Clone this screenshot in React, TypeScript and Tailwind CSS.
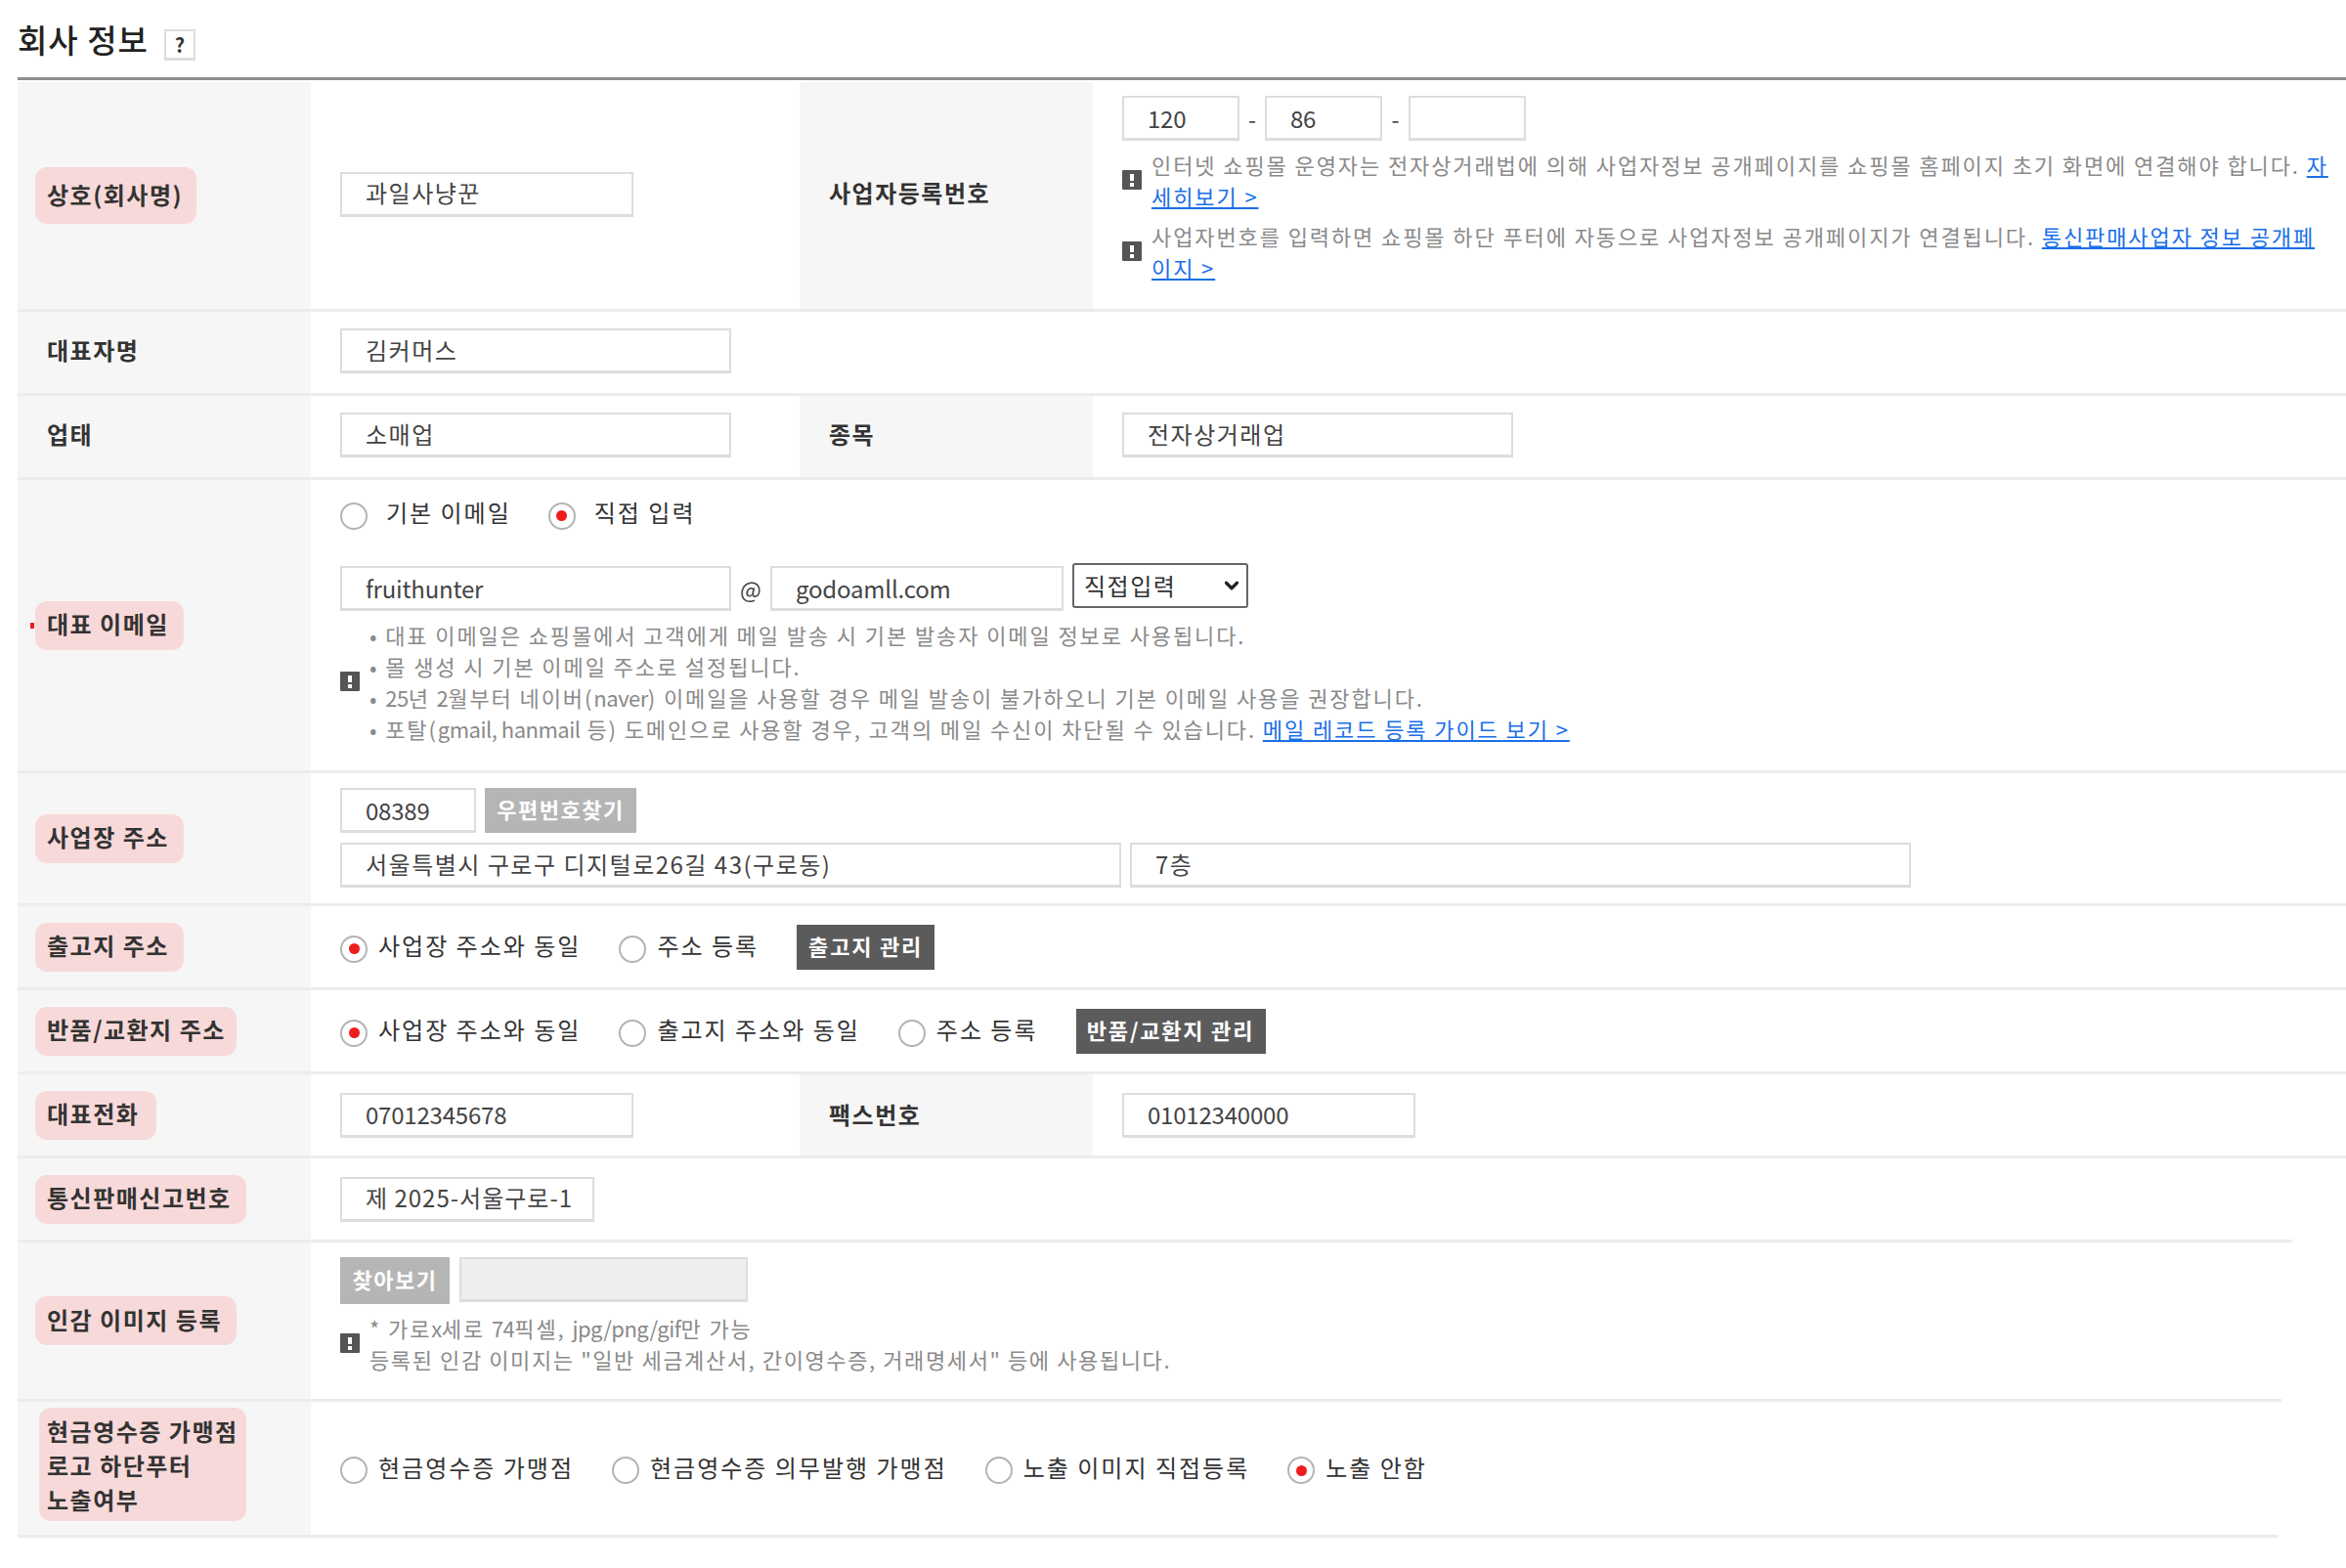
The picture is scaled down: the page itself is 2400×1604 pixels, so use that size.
import type { ReactNode } from "react";
import { ChevronDown } from "lucide-react";

const inputBase = "h-[46px] border-2 border-b-[3px] border-[#ddd] bg-white pl-[24px] text-[#444] outline-none";
const hangulInput = "pb-[3px] text-[24px] tracking-[1.5px]";
const latinInput = "pb-[1px] text-[24px] tracking-[-0.2px]";
const mixedInput = "pb-[3px] text-[24px] tracking-[1px]";

function Field({ value, className, kind = hangulInput }: { value: string; className: string; kind?: string }) {
  return <input readOnly defaultValue={value} className={`${inputBase} ${kind} ${className}`} />;
}

function Badge({ children, className = "" }: { children: ReactNode; className?: string }) {
  return (
    <span className={`flex h-[50px] items-center rounded-[12px] bg-[#f8d9d9] px-[12px] pb-[3px] text-[24px] font-bold tracking-[1.5px] whitespace-nowrap text-[#333] ${className}`}>
      {children}
    </span>
  );
}

function Radio({ label, checked, className = "", gap = "ml-[11px]" }: { label: string; checked?: boolean; className?: string; gap?: string }) {
  return (
    <label className={`flex items-center text-[24px] tracking-[2px] text-[#333] ${className}`}>
      <span className="mt-[4px] flex h-[28px] w-[28px] shrink-0 items-center justify-center rounded-full border-2 border-[#b4b4b4] bg-white">
        {checked ? <span className="h-[11px] w-[11px] rounded-full bg-[#ee1c1c]" /> : null}
      </span>
      <span className={`${gap} -mt-[3px] whitespace-nowrap`}>{label}</span>
    </label>
  );
}

function NoteIcon() {
  return (
    <span className="flex h-[20px] w-[20px] shrink-0 flex-col items-center justify-center gap-[2px] rounded-[1px] bg-[#555]">
      <span className="h-[7px] w-[4px] bg-white" />
      <span className="h-[4px] w-[4px] bg-white" />
    </span>
  );
}

function Note({ children, className = "" }: { children: ReactNode; className?: string }) {
  return (
    <div className={`flex items-center ${className}`}>
      <NoteIcon />
      <div className="ml-[10px] min-w-0 flex-1 text-[22px] leading-[32px] tracking-[1.9px] text-[#8a8a8a]">{children}</div>
    </div>
  );
}

// latin runs are narrower than the hangul spacing in the notes
function L({ children }: { children: ReactNode }) {
  return <span className="tracking-[-0.5px]">{children}</span>;
}

function A({ children }: { children: ReactNode }) {
  return <a className="text-[#1a6fe8] underline">{children}</a>;
}

function Th({ children, className = "" }: { children?: ReactNode; className?: string }) {
  return (
    <div className={`flex w-[300px] shrink-0 items-center bg-[#f6f6f6] text-[24px] font-bold tracking-[1.5px] text-[#333] ${className}`}>
      {children}
    </div>
  );
}

function Row({ children, className }: { children: ReactNode; className: string }) {
  return <div className={`flex border-b-[3px] border-[#ececec] ${className}`}>{children}</div>;
}

function Td({ children, className = "" }: { children: ReactNode; className?: string }) {
  return <div className={`flex min-w-0 pl-[30px] ${className}`}>{children}</div>;
}

function DarkBtn({ children, className }: { children: ReactNode; className: string }) {
  return (
    <button className={`flex h-[46px] items-center justify-center bg-[#5b5b5b] pb-[3px] text-[22px] font-bold tracking-[1.8px] text-white ${className}`}>
      {children}
    </button>
  );
}

export default function App() {
  return (
    <div className="min-h-[1604px] w-[2400px] overflow-hidden bg-white font-['Noto_Sans_CJK_KR',sans-serif]">
      <div className="ml-[18px] flex h-[79px] items-start pt-[20px]">
        <h1 className="text-[33px] leading-[40px] font-medium tracking-[1px] text-[#222]">회사 정보</h1>
        <span className="mt-[10px] ml-[16px] flex h-[32px] w-[32px] items-center justify-center border-2 border-b-[3px] border-[#ddd] text-[20px] font-bold text-[#333]">
          ?
        </span>
      </div>
      <div className="mb-[2px] ml-[18px] h-[3px] bg-[#8f8f8f]" />

      <div className="ml-[18px]">
        <Row className="h-[235px]">
          <Th className="pl-[18px]">
            <Badge className="h-[58px] w-[165px]">상호(회사명)</Badge>
          </Th>
          <Td className="w-[500px] items-center pb-[3px]">
            <Field value="과일사냥꾼" className="w-[300px]" />
          </Td>
          <Th className="pb-[6px] pl-[30px]">사업자등록번호</Th>
          <Td className="w-[1270px] flex-col pt-[14px]">
            <div className="flex items-center text-[23px] text-[#444]">
              <Field kind={latinInput} value="120" className="w-[120px]" />
              <span className="w-[26px] text-center">-</span>
              <Field kind={latinInput} value="86" className="w-[120px]" />
              <span className="w-[27px] text-center">-</span>
              <Field kind={latinInput} value="" className="w-[120px]" />
            </div>
            <Note className="mt-[8px]">
              인터넷 쇼핑몰 운영자는 전자상거래법에 의해 사업자정보 공개페이지를 쇼핑몰 홈페이지 초기 화면에 연결해야 합니다. <A>자세히보기 &gt;</A>
            </Note>
            <Note className="mt-[9px]">
              사업자번호를 입력하면 쇼핑몰 하단 푸터에 자동으로 사업자정보 공개페이지가 연결됩니다. <A>통신판매사업자 정보 공개페이지 &gt;</A>
            </Note>
          </Td>
        </Row>

        <Row className="h-[86px]">
          <Th className="pb-[6px] pl-[30px]">대표자명</Th>
          <Td className="items-center pb-[3px]">
            <Field value="김커머스" className="w-[400px]" />
          </Td>
        </Row>

        <Row className="h-[86px]">
          <Th className="pb-[6px] pl-[30px]">업태</Th>
          <Td className="w-[500px] items-center pb-[3px]">
            <Field value="소매업" className="w-[400px]" />
          </Td>
          <Th className="pb-[6px] pl-[30px]">종목</Th>
          <Td className="items-center pb-[3px]">
            <Field value="전자상거래업" className="w-[400px]" />
          </Td>
        </Row>

        <Row className="h-[300px]">
          <Th className="relative pl-[18px]">
            <span className="absolute top-[146px] left-[13px] z-10 h-[6px] w-[4px] bg-[#ee1c1c]" />
            <Badge className="w-[152px]">대표 이메일</Badge>
          </Th>
          <Td className="flex-col pt-[18px]">
            <div className="flex items-center">
              <Radio label="기본 이메일" gap="ml-[19px]" />
              <Radio label="직접 입력" checked gap="ml-[19px]" className="ml-[38px]" />
            </div>
            <div className="mt-[37px] flex items-start">
              <Field kind={latinInput} value="fruithunter" className="w-[400px]" />
              <span className="w-[40px] pt-[6px] text-center text-[23px] text-[#444]">@</span>
              <Field kind={latinInput} value="godoamll.com" className="w-[300px]" />
              <span className="relative -mt-[3px] ml-[9px]">
                <select
                  defaultValue="직접입력"
                  className="h-[46px] w-[180px] appearance-none rounded-[3px] border-2 border-[#666] bg-white pb-[1px] pl-[10px] text-[24px] tracking-[1.5px] text-[#333]"
                >
                  <option>직접입력</option>
                </select>
                <ChevronDown strokeWidth={3.5} className="pointer-events-none absolute top-[12px] right-[6px] h-[22px] w-[22px] text-[#222]" />
              </span>
            </div>
            <Note className="mt-[8px]">
              <div>• 대표 이메일은 쇼핑몰에서 고객에게 메일 발송 시 기본 발송자 이메일 정보로 사용됩니다.</div>
              <div>• 몰 생성 시 기본 이메일 주소로 설정됩니다.</div>
              <div>
                • <L>25</L>년 <L>2</L>월부터 네이버(<L>naver</L>) 이메일을 사용할 경우 메일 발송이 불가하오니 기본 이메일 사용을 권장합니다.
              </div>
              <div>
                • 포탈(<L>gmail, hanmail</L> 등) 도메인으로 사용할 경우, 고객의 메일 수신이 차단될 수 있습니다. <A>메일 레코드 등록 가이드 보기 &gt;</A>
              </div>
            </Note>
          </Td>
        </Row>

        <Row className="h-[136px]">
          <Th className="pl-[18px]">
            <Badge className="w-[152px]">사업장 주소</Badge>
          </Th>
          <Td className="flex-col gap-[10px] pt-[15px]">
            <div className="flex gap-[9px]">
              <Field kind={latinInput} value="08389" className="w-[139px]" />
              <button className="h-[46px] w-[155px] bg-[#b5b5b5] pb-[3px] text-[22px] font-bold tracking-[1.5px] text-white">우편번호찾기</button>
            </div>
            <div className="flex gap-[9px]">
              <Field value="서울특별시 구로구 디지털로26길 43(구로동)" className="w-[799px]" />
              <Field value="7층" className="w-[799px]" />
            </div>
          </Td>
        </Row>

        <Row className="h-[86px]">
          <Th className="pl-[18px]">
            <Badge className="w-[152px]">출고지 주소</Badge>
          </Th>
          <Td className="items-center">
            <Radio checked label="사업장 주소와 동일" />
            <Radio label="주소 등록" className="ml-[39px]" />
            <DarkBtn className="ml-[39px] w-[141px]">출고지 관리</DarkBtn>
          </Td>
        </Row>

        <Row className="h-[86px]">
          <Th className="pl-[18px]">
            <Badge className="w-[206px]">반품/교환지 주소</Badge>
          </Th>
          <Td className="items-center">
            <Radio checked label="사업장 주소와 동일" />
            <Radio label="출고지 주소와 동일" className="ml-[39px]" />
            <Radio label="주소 등록" className="ml-[39px]" />
            <DarkBtn className="ml-[39px] w-[194px]">반품/교환지 관리</DarkBtn>
          </Td>
        </Row>

        <Row className="h-[86px]">
          <Th className="pl-[18px]">
            <Badge className="w-[124px]">대표전화</Badge>
          </Th>
          <Td className="w-[500px] items-center">
            <Field kind={latinInput} value="07012345678" className="w-[300px]" />
          </Td>
          <Th className="pb-[2px] pl-[30px]">팩스번호</Th>
          <Td className="items-center">
            <Field kind={latinInput} value="01012340000" className="w-[300px]" />
          </Td>
        </Row>

        <Row className="h-[86px] w-[2327px]">
          <Th className="pl-[18px]">
            <Badge className="w-[216px]">통신판매신고번호</Badge>
          </Th>
          <Td className="items-center">
            <Field kind={mixedInput} value="제 2025-서울구로-1" className="w-[260px]" />
          </Td>
        </Row>

        <Row className="h-[163px] w-[2316px]">
          <Th className="pl-[18px]">
            <Badge className="w-[206px]">인감 이미지 등록</Badge>
          </Th>
          <Td className="flex-col pt-[15px]">
            <div className="flex items-start gap-[10px]">
              <button className="h-[48px] w-[112px] bg-[#b5b5b5] pb-[3px] text-[22px] font-bold tracking-[1.5px] text-white">찾아보기</button>
              <div className="h-[46px] w-[295px] border-2 border-b-[3px] border-[#ddd] bg-[#eee]" />
            </div>
            <Note className="mt-[8px]">
              <div>
                * 가로<L>x</L>세로 <L>74</L>픽셀, <L>jpg/png/gif</L>만 가능
              </div>
              <div className="tracking-[1.6px]">등록된 인감 이미지는 "일반 세금계산서, 간이영수증, 거래명세서" 등에 사용됩니다.</div>
            </Note>
          </Td>
        </Row>

        <Row className="h-[139px] w-[2313px]">
          <Th className="pb-[8px] pl-[22px]">
            <Badge className="h-[116px] w-[212px] pl-[8px] leading-[35px]">
              <span className="block pt-[4px]">
                현금영수증 가맹점
                <br />
                로고 하단푸터
                <br />
                노출여부
              </span>
            </Badge>
          </Th>
          <Td className="items-center">
            <Radio label="현금영수증 가맹점" />
            <Radio label="현금영수증 의무발행 가맹점" className="ml-[39px]" />
            <Radio label="노출 이미지 직접등록" className="ml-[39px]" />
            <Radio checked label="노출 안함" className="ml-[39px]" />
          </Td>
        </Row>
      </div>
    </div>
  );
}
